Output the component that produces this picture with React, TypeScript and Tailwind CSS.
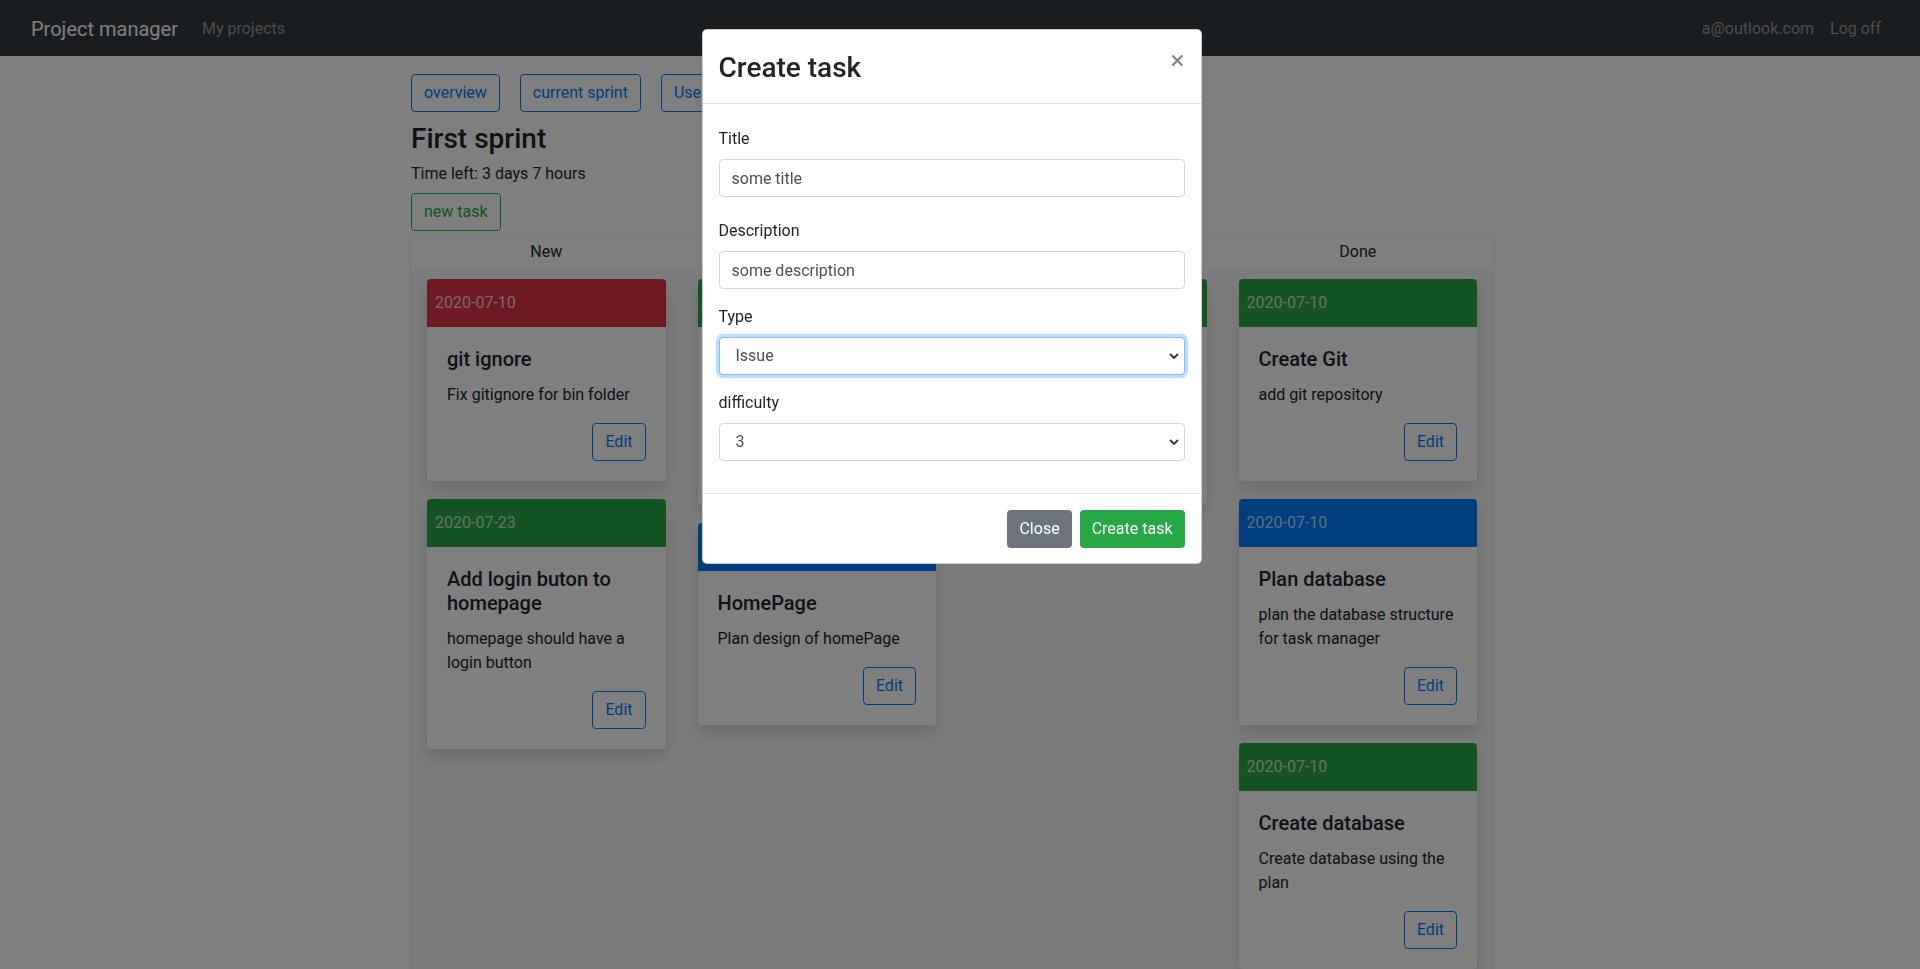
type Task = { date: string; color: string; title: string; desc: string };

const columns: { name: string; tasks: Task[] }[] = [
  {
    name: "New",
    tasks: [
      { date: "2020-07-10", color: "bg-[#dc3545]", title: "git ignore", desc: "Fix gitignore for bin folder" },
      { date: "2020-07-23", color: "bg-[#28a745]", title: "Add login buton to homepage", desc: "homepage should have a login button" },
    ],
  },
  {
    name: "In progress",
    tasks: [
      { date: "2020-07-12", color: "bg-[#28a745]", title: "Login page", desc: "create a login page for the users" },
      { date: "2020-07-15", color: "bg-[#007bff]", title: "HomePage", desc: "Plan design of homePage" },
    ],
  },
  {
    name: "Testing",
    tasks: [{ date: "2020-07-11", color: "bg-[#28a745]", title: "Register", desc: "create register page for new users" }],
  },
  {
    name: "Done",
    tasks: [
      { date: "2020-07-10", color: "bg-[#28a745]", title: "Create Git", desc: "add git repository" },
      { date: "2020-07-10", color: "bg-[#007bff]", title: "Plan database", desc: "plan the database structure for task manager" },
      { date: "2020-07-10", color: "bg-[#28a745]", title: "Create database", desc: "Create database using the plan" },
    ],
  },
];

function TaskCard({ task }: { task: Task }) {
  return (
    <div className="mb-[18px] bg-white rounded overflow-hidden shadow-[0_8px_16px_rgba(0,0,0,0.15)]">
      <div className={`${task.color} h-12 flex items-center px-2 text-white/75`}>{task.date}</div>
      <div className="p-5">
        <h5 className="text-xl font-medium leading-[1.2] mb-3">{task.title}</h5>
        <p className="leading-6 mb-4">{task.desc}</p>
        <div className="flex justify-end">
          <button className="h-[38px] px-3 border border-[#007bff] text-[#007bff] rounded">Edit</button>
        </div>
      </div>
    </div>
  );
}

function Chevron() {
  return (
    <svg width="10" height="6" viewBox="0 0 10 6" className="absolute right-[6px] top-1/2 -translate-y-1/2 pointer-events-none">
      <path d="M1 1l4 4 4-4" fill="none" stroke="#333" strokeWidth="1.8" />
    </svg>
  );
}

export default function App() {
  return (
    <div className="min-h-screen bg-white text-[#212529] [font-family:Roboto,sans-serif] text-base">
      <nav className="h-14 bg-[#343a40] flex items-center px-[31px]">
        <span className="text-xl text-white mr-4 pt-px">Project manager</span>
        <a className="px-2 text-white/50 pt-px">My projects</a>
        <div className="ml-auto flex pt-px">
          <a className="px-2 text-white/50">a@outlook.com</a>
          <a className="px-2 text-white/50">Log off</a>
        </div>
      </nav>

      <main className="w-[1082px] ml-[411px] pt-[18px]">
        <div className="flex gap-5">
          <button className="h-[38px] px-3 border border-[#007bff] text-[#007bff] rounded">overview</button>
          <button className="h-[38px] px-3 border border-[#007bff] text-[#007bff] rounded">current sprint</button>
          <button className="h-[38px] px-3 border border-[#007bff] text-[#007bff] rounded">Users</button>
        </div>
        <h3 className="text-[28px] font-medium leading-[1.2] mt-[10px] mb-[5px]">First sprint</h3>
        <p className="leading-6 mb-[7px] pt-px">Time left: 3 days 7 hours</p>
        <button className="h-[38px] px-3 border border-[#28a745] text-[#28a745] rounded">new task</button>

        <div className="mt-[3px] h-9 grid grid-cols-4 items-center text-center bg-white shadow-[0_1px_4px_rgba(0,0,0,0.12)]">
          {columns.map((c) => (
            <div key={c.name}>{c.name}</div>
          ))}
        </div>
        <div className="grid grid-cols-4 pt-[9px] min-h-[720px] bg-[#f8f9fa] shadow-[0_1px_4px_rgba(0,0,0,0.12)]">
          {columns.map((c) => (
            <div key={c.name} className="px-4">
              {c.tasks.map((t) => (
                <TaskCard key={t.title} task={t} />
              ))}
            </div>
          ))}
        </div>
      </main>

      <div className="fixed inset-0 bg-black/50" />

      <div className="fixed inset-0 flex justify-center items-start pt-[29px] pr-[17px]">
        <div className="w-[500px] bg-white rounded-[5px] border border-black/20">
          <div className="flex items-start px-4 pt-4 pb-4 border-b border-[#dee2e6]">
            <h3 className="text-[28px] font-medium leading-[32px] pt-[6px] mb-[3px]">Create task</h3>
            <button className="ml-auto mt-[2px] text-[26px] font-normal leading-6 text-black/50">×</button>
          </div>
          <div className="px-4 pt-[23px] pb-4">
            <div className="mb-[22px]">
              <label className="block leading-6 mb-2">Title</label>
              <input
                className="w-full h-[38px] px-3 border border-[#ced4da] rounded text-[#495057] outline-none"
                defaultValue="some title"
              />
            </div>
            <div className="mb-4">
              <label className="block leading-6 mb-2">Description</label>
              <input
                className="w-full h-[38px] px-3 border border-[#ced4da] rounded text-[#495057] outline-none"
                defaultValue="some description"
              />
            </div>
            <div className="mb-4">
              <label className="block leading-6 mb-2">Type</label>
              <div className="relative">
                <select
                  className="appearance-none w-full h-[38px] pl-4 border border-[#80bdff] rounded text-[#495057] bg-white outline-none shadow-[0_0_0_3.2px_rgba(0,123,255,0.25)]"
                  defaultValue="Issue"
                >
                  <option>Issue</option>
                  <option>Feature</option>
                  <option>Bug</option>
                </select>
                <Chevron />
              </div>
            </div>
            <div className="mb-4">
              <label className="block leading-6 mb-2">difficulty</label>
              <div className="relative">
                <select
                  className="appearance-none w-full h-[38px] pl-4 border border-[#ced4da] rounded text-[#495057] bg-white outline-none"
                  defaultValue="3"
                >
                  <option>1</option>
                  <option>2</option>
                  <option>3</option>
                  <option>4</option>
                  <option>5</option>
                </select>
                <Chevron />
              </div>
            </div>
          </div>
          <div className="flex justify-end gap-2 px-4 pt-4 pb-[15px] border-t border-[#dee2e6]">
            <button className="h-[38px] px-3 rounded bg-[#6c757d] text-white">Close</button>
            <button className="h-[38px] px-3 rounded bg-[#28a745] text-white">Create task</button>
          </div>
        </div>
      </div>
    </div>
  );
}
